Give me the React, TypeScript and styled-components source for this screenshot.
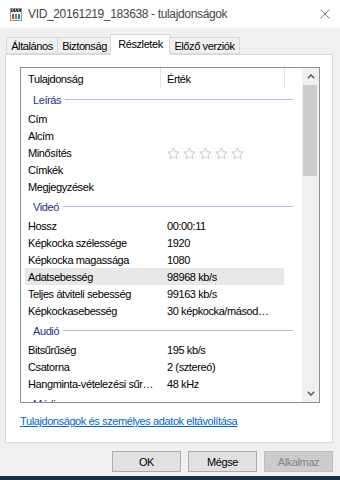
import React from 'react';
import styled, { createGlobalStyle } from 'styled-components';

const GlobalStyle = createGlobalStyle`
  html, body { margin: 0; padding: 0; background: #f0f0f0; }
  body {
    font-family: "Liberation Sans", Arial, sans-serif;
    font-size: 11px;
    letter-spacing: -0.4px;
    color: #000;
  }
  * { box-sizing: border-box; }
`;

const Window = styled.div`
  width: 340px;
  height: 480px;
  display: flex;
  flex-direction: column;
  background: #f0f0f0;
  overflow: hidden;
`;

const TitleBar = styled.div`
  flex: none;
  height: 28px;
  background: #fff;
  display: flex;
  align-items: center;
  padding-left: 10px;
`;

const TitleText = styled.span`
  margin-left: 6px;
  font-size: 12px;
  letter-spacing: -0.35px;
  color: #444;
`;

const CloseBox = styled.div`
  margin-left: auto;
  width: 30px;
  height: 28px;
  display: flex;
  align-items: center;
  justify-content: center;
`;

const TabStrip = styled.div`
  flex: none;
  height: 26px;
  display: flex;
  align-items: flex-end;
  padding-left: 6px;
  position: relative;
  z-index: 1;
`;

const Tab = styled.div<{ $w: number; $active?: boolean }>`
  width: ${p => p.$w}px;
  height: ${p => (p.$active ? 21 : 17)}px;
  margin: ${p => (p.$active ? '0 -1px -1px -2px' : '0 0 0 -1px')};
  background: ${p => (p.$active ? '#fff' : '#f0f0f0')};
  border: 1px solid #d9d9d9;
  border-bottom: ${p => (p.$active ? 'none' : '1px solid #d9d9d9')};
  display: flex;
  align-items: ${p => (p.$active ? 'flex-start' : 'center')};
  padding-top: ${p => (p.$active ? '3px' : '0')};
  justify-content: center;
  white-space: nowrap;
  &:first-child { margin-left: 0; }
`;

const Panel = styled.div`
  flex: none;
  height: 389px;
  margin: 0 7px 0 5px;
  background: #fff;
  border: 1px solid #d9d9d9;
  padding: 12px 0 0 14px;
  display: flex;
  flex-direction: column;
`;

const ListBox = styled.div`
  width: 300px;
  height: 336px;
  border: 1px solid #8c9199;
  background: #fff;
  display: flex;
  overflow: hidden;
`;

const ListContent = styled.div`
  flex: 1;
  overflow: hidden;
  display: flex;
  flex-direction: column;
`;

const Header = styled.div`
  flex: none;
  height: 20px;
  display: flex;
`;

const HeaderCell = styled.div<{ $w?: number; $pad: number }>`
  ${p => (p.$w ? `width: ${p.$w}px;` : 'flex: 1;')}
  flex-shrink: 0;
  height: 100%;
  border-right: ${p => (p.$w ? '1px solid #e5e5e5' : 'none')};
  padding-left: ${p => p.$pad}px;
  display: flex;
  align-items: center;
  padding-top: 1px;
`;

const Group = styled.div`
  flex: none;
  height: 22px;
  display: flex;
  align-items: center;
  padding: 2px 9px 0 12px;
  color: #1e3287;
`;

const GroupLine = styled.div`
  flex: 1;
  height: 1px;
  margin: 0 0 1px 4px;
  background: #b2bfe4;
`;

const Row = styled.div<{ $hover?: boolean }>`
  flex: none;
  height: 17px;
  width: 259px;
  margin-left: 4px;
  display: flex;
  align-items: center;
  background: ${p => (p.$hover ? '#e8e8e8' : 'transparent')};
`;

const NameCell = styled.div`
  width: 136px;
  flex: none;
  padding: 0 2px 0 3px;
  white-space: nowrap;
  overflow: hidden;
  text-overflow: ellipsis;
`;

const ValueCell = styled.div`
  flex: 1;
  min-width: 0;
  padding: 0 12px 0 6px;
  white-space: nowrap;
  overflow: hidden;
  text-overflow: ellipsis;
`;

const Stars = styled.div`
  display: flex;
  gap: 3px;
  padding-top: 1px;
`;

const ScrollBar = styled.div`
  width: 17px;
  flex: none;
  background: #f0f0f0;
  display: flex;
  flex-direction: column;
`;

const ScrollArrow = styled.div`
  height: 17px;
  flex: none;
  display: flex;
  align-items: center;
  justify-content: center;
`;

const Thumb = styled.div`
  height: 91px;
  margin: 0 2px 0 1px;
  background: #cdcdcd;
  flex: none;
`;

const Track = styled.div`
  flex: 1;
`;

const Link = styled.a`
  margin-top: 11px;
  color: #0066cc;
  text-decoration: underline;
  align-self: flex-start;
  line-height: 14px;
  cursor: pointer;
`;

const Footer = styled.div`
  flex: none;
  display: flex;
  justify-content: flex-end;
  gap: 7px;
  padding: 8px 7px 0 0;
`;

const Button = styled.button<{ $disabled?: boolean }>`
  width: 69px;
  height: 21px;
  font-family: inherit;
  font-size: 11px;
  letter-spacing: -0.4px;
  background: ${p => (p.$disabled ? '#cccccc' : '#e1e1e1')};
  border: 1px solid ${p => (p.$disabled ? '#bfbfbf' : '#adadad')};
  color: ${p => (p.$disabled ? '#838383' : '#000')};
  padding: 0;
`;

const Taskbar = styled.div`
  margin-top: auto;
  height: 4px;
  flex: none;
  background: #1c2f4a;
`;

const FileIcon = () => (
  <svg width="12" height="13" viewBox="0 0 12 13">
    <rect x="0.5" y="0.5" width="11" height="12" fill="#fff" stroke="#9a9a9a" />
    <rect x="1" y="1" width="10" height="3" fill="#2a2a2a" />
    <path d="M2 1 L3.5 4 M5 1 L6.5 4 M8 1 L9.5 4" stroke="#fff" strokeWidth="0.8" />
    <rect x="2" y="6" width="2" height="5" fill="#d33" />
    <rect x="5" y="6" width="2" height="5" fill="#3a3" />
    <rect x="8" y="6" width="2" height="5" fill="#36c" />
  </svg>
);

const CloseIcon = () => (
  <svg width="10" height="10" viewBox="0 0 10 10">
    <path d="M0.5 0.5 L9.5 9.5 M9.5 0.5 L0.5 9.5" stroke="#7a7a7a" strokeWidth="1" />
  </svg>
);

const Star = () => (
  <svg width="13" height="13" viewBox="0 0 13 13">
    <path
      d="M6.5 0.8 L8.1 4.7 L12.3 5 L9.1 7.7 L10.1 11.8 L6.5 9.6 L2.9 11.8 L3.9 7.7 L0.7 5 L4.9 4.7 Z"
      fill="none"
      stroke="#c4c4c4"
      strokeWidth="0.9"
      strokeLinejoin="round"
    />
  </svg>
);

const Chevron = ({ up }: { up?: boolean }) => (
  <svg width="8" height="5" viewBox="0 0 8 5">
    <path
      d={up ? 'M0.8 4.2 L4 1 L7.2 4.2' : 'M0.8 0.8 L4 4 L7.2 0.8'}
      fill="none"
      stroke="#606060"
      strokeWidth="1.6"
    />
  </svg>
);

type Item =
  | { kind: 'group'; label: string }
  | { kind: 'row'; name: string; value?: string; stars?: boolean; hover?: boolean };

const items: Item[] = [
  { kind: 'group', label: 'Leírás' },
  { kind: 'row', name: 'Cím' },
  { kind: 'row', name: 'Alcím' },
  { kind: 'row', name: 'Minősítés', stars: true },
  { kind: 'row', name: 'Címkék' },
  { kind: 'row', name: 'Megjegyzések' },
  { kind: 'group', label: 'Videó' },
  { kind: 'row', name: 'Hossz', value: '00:00:11' },
  { kind: 'row', name: 'Képkocka szélessége', value: '1920' },
  { kind: 'row', name: 'Képkocka magassága', value: '1080' },
  { kind: 'row', name: 'Adatsebesség', value: '98968 kb/s', hover: true },
  { kind: 'row', name: 'Teljes átviteli sebesség', value: '99163 kb/s' },
  { kind: 'row', name: 'Képkockasebesség', value: '30 képkocka/másodperc' },
  { kind: 'group', label: 'Audió' },
  { kind: 'row', name: 'Bitsűrűség', value: '195 kb/s' },
  { kind: 'row', name: 'Csatorna', value: '2 (sztereó)' },
  { kind: 'row', name: 'Hangminta-vételezési sűrűség', value: '48 kHz' },
  { kind: 'group', label: 'Média' },
  { kind: 'row', name: 'Közreműködő előadók' },
];

export default function App() {
  return (
    <>
      <GlobalStyle />
      <Window>
        <TitleBar>
          <FileIcon />
          <TitleText>VID_20161219_183638 - tulajdonságok</TitleText>
          <CloseBox>
            <CloseIcon />
          </CloseBox>
        </TitleBar>
        <TabStrip>
          <Tab $w={52}>Általános</Tab>
          <Tab $w={55}>Biztonság</Tab>
          <Tab $w={61} $active>Részletek</Tab>
          <Tab $w={71}>Előző verziók</Tab>
        </TabStrip>
        <Panel>
          <ListBox>
            <ListContent>
              <Header>
                <HeaderCell $w={140} $pad={7}>Tulajdonság</HeaderCell>
                <HeaderCell $w={124} $pad={6}>Érték</HeaderCell>
                <HeaderCell $pad={0} />
              </Header>
              {items.map((it, i) =>
                it.kind === 'group' ? (
                  <Group key={i}>
                    {it.label}
                    <GroupLine />
                  </Group>
                ) : (
                  <Row key={i} $hover={it.hover}>
                    <NameCell>{it.name}</NameCell>
                    <ValueCell>
                      {it.stars ? (
                        <Stars>
                          <Star />
                          <Star />
                          <Star />
                          <Star />
                          <Star />
                        </Stars>
                      ) : (
                        it.value
                      )}
                    </ValueCell>
                  </Row>
                )
              )}
            </ListContent>
            <ScrollBar>
              <ScrollArrow>
                <Chevron up />
              </ScrollArrow>
              <Thumb />
              <Track />
              <ScrollArrow>
                <Chevron />
              </ScrollArrow>
            </ScrollBar>
          </ListBox>
          <Link>Tulajdonságok és személyes adatok eltávolítása</Link>
        </Panel>
        <Footer>
          <Button>OK</Button>
          <Button>Mégse</Button>
          <Button $disabled>Alkalmaz</Button>
        </Footer>
        <Taskbar />
      </Window>
    </>
  );
}
